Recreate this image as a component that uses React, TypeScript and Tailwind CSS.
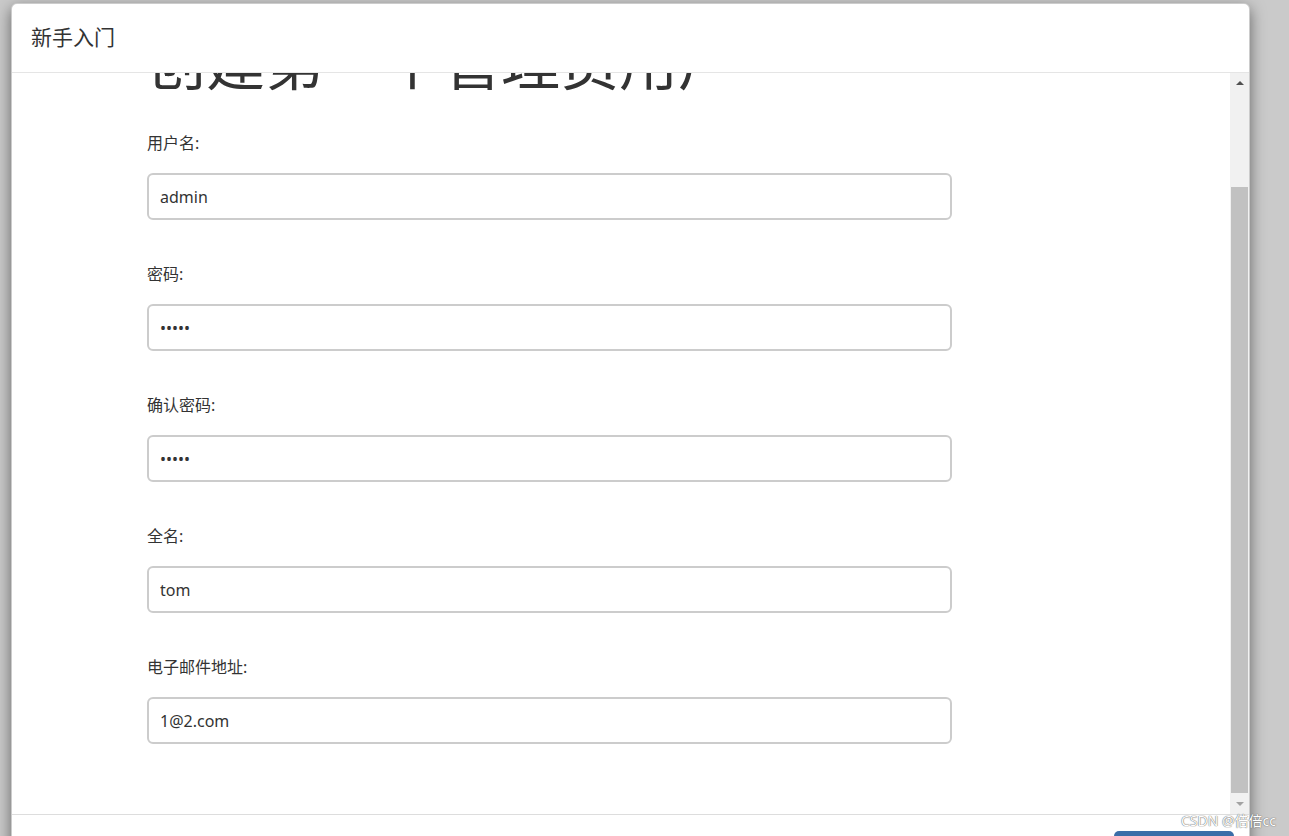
import React from "react";

const font = { fontFamily: '"Noto Sans", "Noto Sans CJK SC", sans-serif' };

const fields: { label: string; value: string; type: string }[] = [
  { label: "用户名:", value: "admin", type: "text" },
  { label: "密码:", value: "admin", type: "password" },
  { label: "确认密码:", value: "admin", type: "password" },
  { label: "全名:", value: "tom", type: "text" },
  { label: "电子邮件地址:", value: "1@2.com", type: "text" },
];

const Field: React.FC<{ label: string; value: string; type: string }> = ({ label, value, type }) => (
  <div className="mb-[42px]">
    <label className="block h-6 leading-6 text-[16px] text-[#333] mb-[18px]">{label}</label>
    <input
      readOnly
      type={type}
      value={value}
      className="block w-[805px] h-[47px] rounded-[6px] border-2 border-[#cccccc] bg-white px-[11px] text-[16px] text-[#333] outline-none"
      style={font}
    />
  </div>
);

const Scrollbar: React.FC = () => (
  <div className="w-[19px] shrink-0 bg-[#f1f1f1] flex flex-col items-center">
    <div className="h-[20px] w-full flex items-center justify-center">
      <div className="w-0 h-0 border-l-[4px] border-r-[4px] border-b-[4px] border-l-transparent border-r-transparent border-b-[#505050]" />
    </div>
    <div className="h-[94px]" />
    <div className="w-[17px] h-[606px] bg-[#c1c1c1]" />
    <div className="flex-1 w-full flex items-center justify-center">
      <div className="w-0 h-0 border-l-[4px] border-r-[4px] border-t-[4px] border-l-transparent border-r-transparent border-t-[#a3a3a3]" />
    </div>
  </div>
);

export default function App() {
  return (
    <div className="relative w-[1289px] h-[836px] overflow-hidden bg-[#cacaca] pt-[3px] pl-[11px]" style={font}>
      <div className="w-[1239px] h-[900px] bg-white rounded-t-[6px] border border-black/20 shadow-[0_5px_15px_rgba(0,0,0,0.5)] flex flex-col">
        {/* header */}
        <div className="h-[69px] shrink-0 border-b border-[#e5e5e5] flex items-center pl-[19px]">
          <h4 className="text-[21px] text-[#333] font-normal">新手入门</h4>
        </div>
        {/* body */}
        <div className="h-[742px] shrink-0 flex border-b border-[#dddddd]">
          <div className="flex-1 overflow-hidden">
            <div className="mt-[-42px] pl-[135px]">
              <h1 className="h-[62px] leading-[62px] text-[59px] font-normal text-[#333] mb-[38px] whitespace-nowrap">
                创建第一个管理员用户
              </h1>
              {fields.map((f) => (
                <Field key={f.label} {...f} />
              ))}
            </div>
          </div>
          <Scrollbar />
        </div>
        {/* footer */}
        <div className="flex justify-end pt-[16px] pr-[15px]">
          <button className="w-[120px] h-[40px] rounded-[5px] bg-[#3b6ea8] text-white text-[14px]">下一步</button>
        </div>
      </div>
      <div
        className="absolute left-[1181px] top-[810px] text-[14px] text-white whitespace-nowrap"
        style={{ textShadow: "0 0 1px #666, 0 0 1px #666" }}
      >
        CSDN @倍倍cc
      </div>
    </div>
  );
}
